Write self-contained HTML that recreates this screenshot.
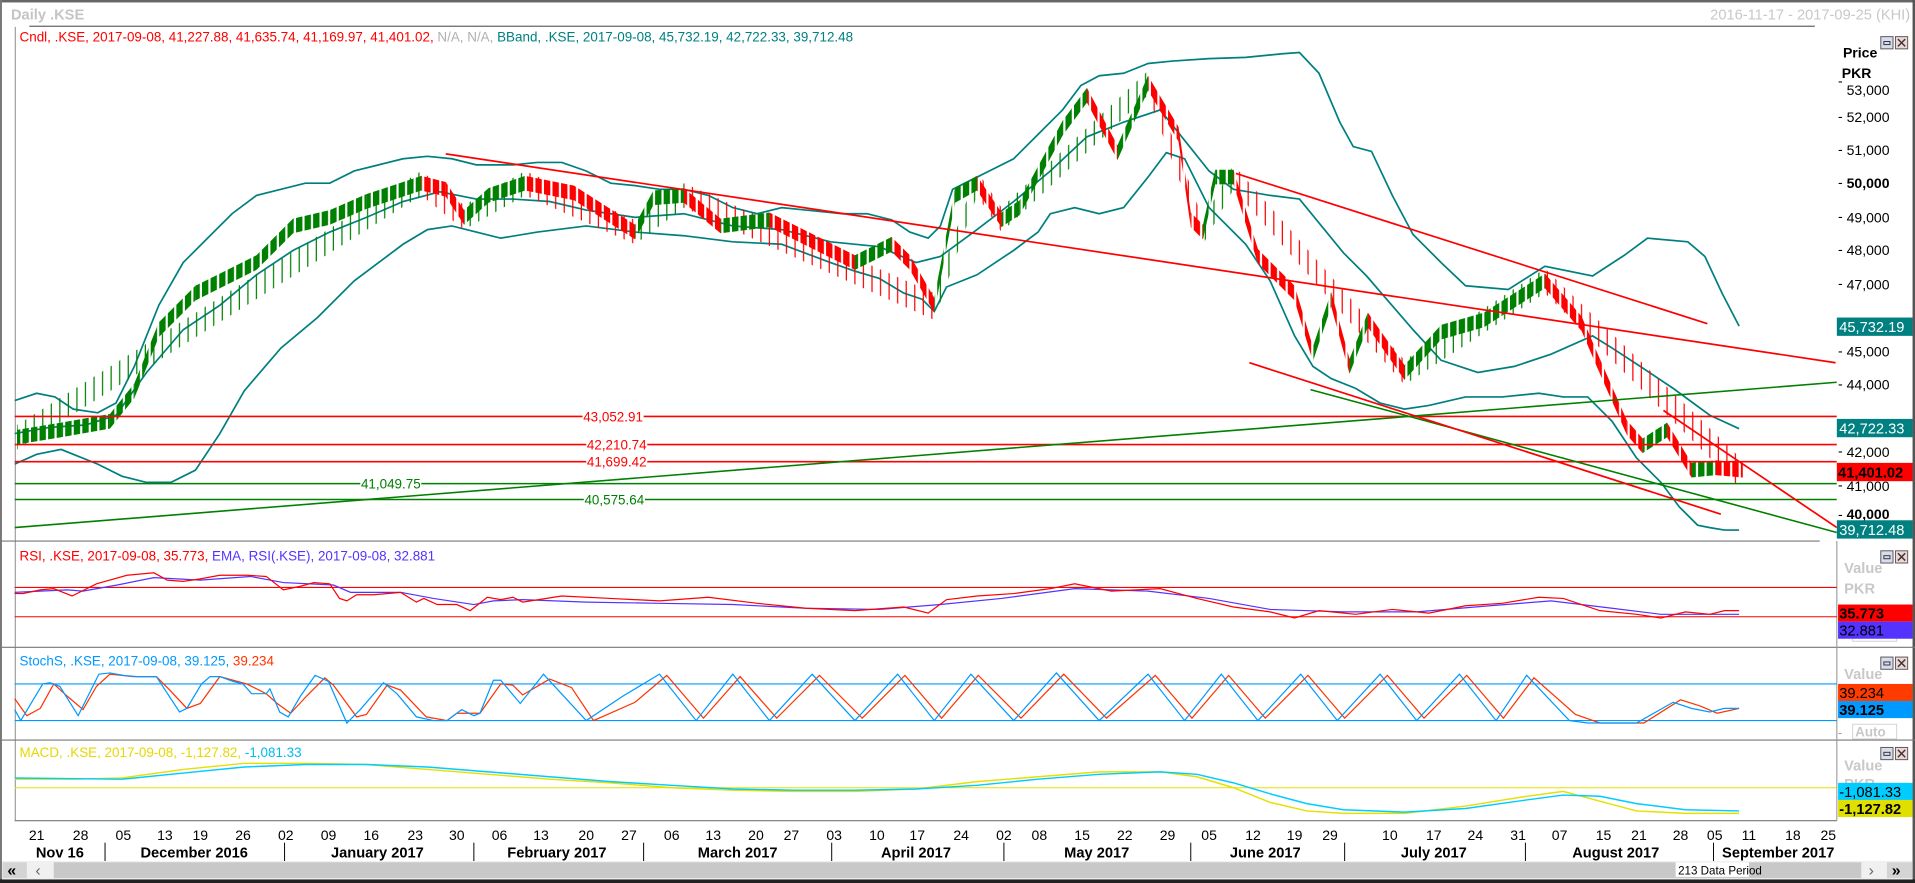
<!DOCTYPE html>
<html><head><meta charset="utf-8">
<style>
html,body{margin:0;padding:0;background:#fff;overflow:hidden;width:1915px;height:883px}
svg{display:block}
</style></head>
<body>
<svg width="1915" height="883" viewBox="0 0 1568 723" preserveAspectRatio="none" font-family="Liberation Sans, DejaVu Sans, sans-serif" font-size="11" xmlns="http://www.w3.org/2000/svg">
<defs>
<clipPath id="cp"><rect x="12" y="22" width="1492" height="421"/></clipPath>
<pattern id="pg" patternUnits="userSpaceOnUse" x="11.4" y="0" width="7" height="10"><rect x="0" y="0" width="5.2" height="10" fill="#008000"/><rect x="2.3" y="0" width="1" height="10" fill="#008000"/></pattern>
<pattern id="pr" patternUnits="userSpaceOnUse" x="11.4" y="0" width="7" height="10"><rect x="0" y="0" width="5.2" height="10" fill="#ff0000"/></pattern>
<pattern id="wg" patternUnits="userSpaceOnUse" x="11.4" y="0" width="7" height="10"><rect x="2.1" y="0" width="1" height="10" fill="#008000"/></pattern>
<pattern id="wr" patternUnits="userSpaceOnUse" x="11.4" y="0" width="7" height="10"><rect x="2.1" y="0" width="1" height="10" fill="#ff0000"/></pattern>
</defs>
<rect x="0" y="0" width="1568" height="723" fill="#fff"/>
<rect x="0" y="0" width="1568" height="2" fill="#666"/>
<rect x="0" y="0" width="1.6" height="723" fill="#777"/>
<rect x="1566" y="0" width="2" height="723" fill="#555"/>
<rect x="0" y="720" width="1568" height="3" fill="#222"/>
<line x1="12.5" y1="22" x2="12.5" y2="672" stroke="#888" stroke-width="0.8"/>
<text x="9" y="16" fill="#c4c4c4" font-size="12" font-weight="bold">Daily .KSE</text>
<text x="1564" y="16" fill="#c8c8c8" font-size="12" text-anchor="end">2016-11-17 - 2017-09-25 (KHI)</text>
<line x1="24" y1="21.5" x2="1486" y2="21.5" stroke="#666" stroke-width="1"/>
<text x="16" y="34" font-size="11"><tspan fill="#ff0000">Cndl, .KSE, 2017-09-08, 41,227.88, 41,635.74, 41,169.97, 41,401.02,</tspan><tspan fill="#b0b0b0"> N/A, N/A,</tspan><tspan fill="#008080"> BBand, .KSE, 2017-09-08, 45,732.19, 42,722.33, 39,712.48</tspan></text>

<line x1="0" y1="443" x2="1490" y2="443" stroke="#777" stroke-width="0.9"/>
<line x1="0" y1="530" x2="1568" y2="530" stroke="#777" stroke-width="0.9"/>
<line x1="0" y1="606" x2="1568" y2="606" stroke="#777" stroke-width="0.9"/>
<line x1="12" y1="672" x2="1504" y2="672" stroke="#777" stroke-width="0.9"/>
<line x1="1504" y1="443" x2="1504" y2="672" stroke="#999" stroke-width="0.9"/>

<g clip-path="url(#cp)">
<!-- Bollinger bands -->
<g fill="none" stroke="#007f7f" stroke-width="1.4">
<polyline points="12,328 30,322 45,325 60,335 80,338 95,330 110,300 130,250 150,215 170,195 190,175 210,160 230,155 250,150 270,150 290,140 310,135 330,130 350,128 370,130 390,135 420,135 440,133 460,133 480,140 500,150 520,152 540,155 560,155 580,160 600,170 620,175 640,170 660,172 690,175 710,175 730,180 745,190 760,195 770,185 780,155 790,150 810,140 830,130 850,110 870,90 885,70 900,62 920,60 940,52 960,50 990,48 1020,47 1050,44 1064,43 1080,60 1097,100 1108,120 1123,124 1140,160 1157,192 1180,215 1200,234 1235,237 1265,218 1304,226 1330,209 1349,195 1382,198 1396,210 1410,240 1424,267"/>
<polyline points="12,355 40,350 70,348 95,340 120,305 150,270 180,250 210,225 240,205 270,190 300,178 330,165 360,157 390,163 420,163 450,165 480,172 520,178 560,175 600,185 640,188 680,198 720,202 750,215 770,210 800,188 830,165 860,140 890,112 920,100 950,90 970,115 990,140 1010,155 1040,160 1064,163 1100,207 1119,226 1138,248 1157,270 1180,295 1210,305 1240,300 1270,290 1304,275 1320,285 1343,300 1370,318 1400,340 1424,351"/>
<polyline points="12,380 30,372 50,368 60,372 80,380 100,390 120,395 140,395 160,385 180,355 200,320 230,285 260,260 290,230 310,215 330,200 350,188 370,185 390,190 410,195 440,190 480,185 520,190 560,193 600,198 640,200 680,215 700,222 720,228 740,240 755,245 765,255 775,235 800,225 830,205 850,190 860,175 880,170 900,175 920,170 940,145 955,125 970,130 990,170 1020,200 1040,230 1060,275 1075,300 1090,310 1110,318 1130,330 1150,335 1170,332 1200,325 1230,325 1260,322 1280,325 1300,325 1320,345 1340,375 1360,395 1375,415 1390,430 1400,432 1412,434 1424,434"/>
</g>
<!-- candles (wicks) -->
<g>
<polygon fill="url(#wg)" points="14,348 345,140 345,160 14,368"/>
<polygon fill="url(#wr)" points="345,140 380,168 380,188 345,160"/>
<polygon fill="url(#wg)" points="380,168 430,140 430,160 380,188"/>
<polygon fill="url(#wr)" points="430,140 520,180 520,200 430,160"/>
<polygon fill="url(#wg)" points="520,180 560,150 560,170 520,200"/>
<polygon fill="url(#wr)" points="560,150 765,240 765,262 560,170"/>
<polygon fill="url(#wg)" points="765,240 800,140 800,160 765,262"/>
<polygon fill="url(#wr)" points="800,140 820,170 820,190 800,160"/>
<polygon fill="url(#wg)" points="820,170 940,58 940,78 820,190"/>
<polygon fill="url(#wr)" points="940,58 985,180 985,200 940,78"/>
<polygon fill="url(#wg)" points="985,180 1010,135 1010,155 985,200"/>
<polygon fill="url(#wr)" points="1010,135 1150,295 1150,315 1010,155"/>
<polygon fill="url(#wg)" points="1150,295 1265,220 1265,240 1150,315"/>
<polygon fill="url(#wr)" points="1265,220 1425,375 1425,400 1265,240"/>
</g>
<!-- candles (bodies) -->
<g>
<polygon fill="url(#pg)" points="14,352 50,346 50,358 14,364"/>
<polygon fill="url(#pg)" points="50,346 90,339 90,351 50,358"/>
<polygon fill="url(#pg)" points="90,339 110,314 110,326 90,351"/>
<polygon fill="url(#pg)" points="110,314 130,264 130,276 110,326"/>
<polygon fill="url(#pg)" points="130,264 160,234 160,246 130,276"/>
<polygon fill="url(#pg)" points="160,234 180,224 180,236 160,246"/>
<polygon fill="url(#pg)" points="180,224 210,209 210,221 180,236"/>
<polygon fill="url(#pg)" points="210,209 240,179 240,191 210,221"/>
<polygon fill="url(#pg)" points="240,179 270,172 270,184 240,191"/>
<polygon fill="url(#pg)" points="270,172 300,159 300,171 270,184"/>
<polygon fill="url(#pg)" points="300,159 345,144 345,156 300,171"/>
<polygon fill="url(#pr)" points="345,144 365,149 365,161 345,156"/>
<polygon fill="url(#pr)" points="365,149 380,172 380,184 365,161"/>
<polygon fill="url(#pg)" points="380,172 400,154 400,166 380,184"/>
<polygon fill="url(#pg)" points="400,154 430,144 430,156 400,166"/>
<polygon fill="url(#pr)" points="430,144 470,152 470,164 430,156"/>
<polygon fill="url(#pr)" points="470,152 520,184 520,196 470,164"/>
<polygon fill="url(#pg)" points="520,184 535,156 535,168 520,196"/>
<polygon fill="url(#pg)" points="535,156 560,154 560,166 535,168"/>
<polygon fill="url(#pr)" points="560,154 590,179 590,191 560,166"/>
<polygon fill="url(#pg)" points="590,179 630,174 630,186 590,191"/>
<polygon fill="url(#pr)" points="630,174 700,209 700,221 630,186"/>
<polygon fill="url(#pg)" points="700,209 730,194 730,206 700,221"/>
<polygon fill="url(#pr)" points="730,194 745,209 745,221 730,206"/>
<polygon fill="url(#pr)" points="745,209 765,244 765,256 745,221"/>
<polygon fill="url(#pg)" points="765,244 782,154 782,166 765,256"/>
<polygon fill="url(#pg)" points="782,154 800,144 800,156 782,166"/>
<polygon fill="url(#pr)" points="800,144 820,174 820,186 800,156"/>
<polygon fill="url(#pg)" points="820,174 835,164 835,176 820,186"/>
<polygon fill="url(#pg)" points="835,164 870,99 870,111 835,176"/>
<polygon fill="url(#pg)" points="870,99 890,72 890,84 870,111"/>
<polygon fill="url(#pr)" points="890,72 915,119 915,131 890,84"/>
<polygon fill="url(#pg)" points="915,119 940,62 940,74 915,131"/>
<polygon fill="url(#pr)" points="940,62 965,104 965,116 940,74"/>
<polygon fill="url(#pr)" points="965,104 975,174 975,186 965,116"/>
<polygon fill="url(#pr)" points="975,174 985,184 985,196 975,186"/>
<polygon fill="url(#pg)" points="985,184 995,139 995,151 985,196"/>
<polygon fill="url(#pg)" points="995,139 1010,139 1010,151 995,151"/>
<polygon fill="url(#pr)" points="1010,139 1030,204 1030,216 1010,151"/>
<polygon fill="url(#pr)" points="1030,204 1060,234 1060,246 1030,216"/>
<polygon fill="url(#pr)" points="1060,234 1075,284 1075,296 1060,246"/>
<polygon fill="url(#pg)" points="1075,284 1090,239 1090,251 1075,296"/>
<polygon fill="url(#pr)" points="1090,239 1105,294 1105,306 1090,251"/>
<polygon fill="url(#pg)" points="1105,294 1120,256 1120,268 1105,306"/>
<polygon fill="url(#pr)" points="1120,256 1150,299 1150,311 1120,268"/>
<polygon fill="url(#pg)" points="1150,299 1180,266 1180,278 1150,311"/>
<polygon fill="url(#pg)" points="1180,266 1215,256 1215,268 1180,278"/>
<polygon fill="url(#pg)" points="1215,256 1265,224 1265,236 1215,268"/>
<polygon fill="url(#pr)" points="1265,224 1295,259 1295,271 1265,236"/>
<polygon fill="url(#pr)" points="1295,259 1310,294 1310,306 1295,271"/>
<polygon fill="url(#pr)" points="1310,294 1332,344 1332,356 1310,306"/>
<polygon fill="url(#pr)" points="1332,344 1345,359 1345,371 1332,356"/>
<polygon fill="url(#pg)" points="1345,359 1365,346 1365,358 1345,371"/>
<polygon fill="url(#pr)" points="1365,346 1385,379 1385,391 1365,358"/>
<polygon fill="url(#pg)" points="1385,379 1405,377 1405,389 1385,391"/>
<polygon fill="url(#pr)" points="1405,377 1427,379 1427,391 1405,389"/>
</g>
<!-- levels / trend lines -->
<line x1="12" y1="341" x2="1504" y2="341" stroke="#ff0000" stroke-width="1.3"/>
<line x1="12" y1="364" x2="1504" y2="364" stroke="#ff0000" stroke-width="1.3"/>
<line x1="12" y1="378" x2="1504" y2="378" stroke="#ff0000" stroke-width="1.3"/>
<line x1="12" y1="396" x2="1504" y2="396" stroke="#008000" stroke-width="1.3"/>
<line x1="12" y1="409" x2="1504" y2="409" stroke="#008000" stroke-width="1.3"/>
<line x1="12" y1="432" x2="1504" y2="313" stroke="#008000" stroke-width="1.3"/>
<line x1="1073" y1="319" x2="1504" y2="436" stroke="#008000" stroke-width="1.3"/>
<line x1="365" y1="126" x2="1503" y2="297" stroke="#ff0000" stroke-width="1.4"/>
<line x1="1012" y1="142" x2="1398" y2="265" stroke="#ff0000" stroke-width="1.4"/>
<line x1="1023" y1="297" x2="1409" y2="421" stroke="#ff0000" stroke-width="1.4"/>
<line x1="1362" y1="336" x2="1504" y2="432" stroke="#ff0000" stroke-width="1.4"/>
</g>
<g font-size="11">
<rect x="477" y="334" width="50" height="12" fill="#fff"/><text x="502" y="345" fill="#ff0000" text-anchor="middle">43,052.91</text>
<rect x="480" y="357" width="50" height="12" fill="#fff"/><text x="505" y="368" fill="#ff0000" text-anchor="middle">42,210.74</text>
<rect x="480" y="371" width="50" height="12" fill="#fff"/><text x="505" y="382" fill="#ff0000" text-anchor="middle">41,699.42</text>
<rect x="295" y="389" width="50" height="12" fill="#fff"/><text x="320" y="400" fill="#008000" text-anchor="middle">41,049.75</text>
<rect x="478" y="402" width="50" height="12" fill="#fff"/><text x="503" y="413" fill="#008000" text-anchor="middle">40,575.64</text>
</g>

<g font-size="11.5" fill="#000">
<text x="1509" y="47" font-weight="bold">Price</text>
<text x="1508" y="64" font-weight="bold">PKR</text>
<text x="1505" y="70">-</text><text x="1512" y="78">53,000</text>
<text x="1505" y="99">-</text><text x="1512" y="100">52,000</text>
<text x="1505" y="126">-</text><text x="1512" y="127">51,000</text>
<text x="1505" y="153">-</text><text x="1512" y="154" font-weight="bold">50,000</text>
<text x="1505" y="181">-</text><text x="1512" y="182">49,000</text>
<text x="1505" y="208">-</text><text x="1512" y="209">48,000</text>
<text x="1505" y="236">-</text><text x="1512" y="237">47,000</text>
<text x="1505" y="291">-</text><text x="1512" y="292">45,000</text>
<text x="1505" y="318">-</text><text x="1512" y="319">44,000</text>
<text x="1505" y="373">-</text><text x="1512" y="374">42,000</text>
<text x="1505" y="401">-</text><text x="1512" y="402">41,000</text>
<text x="1505" y="425">-</text><text x="1512" y="425" font-weight="bold">40,000</text>
</g>
<rect x="1504" y="260" width="62" height="15" fill="#008080"/><text x="1506" y="272" fill="#fff" font-size="12">45,732.19</text>
<rect x="1504" y="343" width="62" height="15" fill="#008080"/><text x="1506" y="355" fill="#fff" font-size="12">42,722.33</text>
<rect x="1504" y="379" width="62" height="15" fill="#ff0000"/><text x="1505" y="391" fill="#000" font-size="12" font-weight="bold">41,401.02</text>
<rect x="1504" y="426" width="62" height="15" fill="#008080"/><text x="1506" y="438" fill="#fff" font-size="12">39,712.48</text>

<!-- buttons -->
<g stroke-width="0.8">
<rect x="1540" y="30" width="10" height="10" fill="#d8dde8" stroke="#556"/><rect x="1542.5" y="34" width="5" height="2.5" fill="none" stroke="#334"/><rect x="1552" y="30" width="10" height="10" fill="#e8d8d8" stroke="#655"/><path d="M1554 32L1560 38M1560 32L1554 38" stroke="#433" stroke-width="1.2"/>
<rect x="1540" y="451" width="10" height="10" fill="#d8dde8" stroke="#556"/><rect x="1542.5" y="455" width="5" height="2.5" fill="none" stroke="#334"/><rect x="1552" y="451" width="10" height="10" fill="#e8d8d8" stroke="#655"/><path d="M1554 453L1560 459M1560 453L1554 459" stroke="#433" stroke-width="1.2"/>
<rect x="1540" y="538" width="10" height="10" fill="#d8dde8" stroke="#556"/><rect x="1542.5" y="542" width="5" height="2.5" fill="none" stroke="#334"/><rect x="1552" y="538" width="10" height="10" fill="#e8d8d8" stroke="#655"/><path d="M1554 540L1560 546M1560 540L1554 546" stroke="#433" stroke-width="1.2"/>
<rect x="1540" y="612" width="10" height="10" fill="#d8dde8" stroke="#556"/><rect x="1542.5" y="616" width="5" height="2.5" fill="none" stroke="#334"/><rect x="1552" y="612" width="10" height="10" fill="#e8d8d8" stroke="#655"/><path d="M1554 614L1560 620M1560 614L1554 620" stroke="#433" stroke-width="1.2"/>
</g>

<!-- RSI -->
<text x="16" y="459" font-size="11"><tspan fill="#ff0000">RSI, .KSE, 2017-09-08, 35.773,</tspan><tspan fill="#5533ff"> EMA, RSI(.KSE), 2017-09-08, 32.881</tspan></text>
<line x1="12" y1="481" x2="1504" y2="481" stroke="#ff0000" stroke-width="0.9"/>
<line x1="12" y1="505" x2="1504" y2="505" stroke="#ff0000" stroke-width="0.9"/>
<polyline fill="none" stroke="#5533ff" stroke-width="1" points="12,485 33,484 55,483 68,484 96,479 126,473 164,475 205,472 232,477 273,479 287,485 328,485 355,490 388,495 404,492 428,491 480,493 540,494 600,495 660,498 720,499 770,495 820,490 880,482 940,484 990,490 1040,499 1100,501 1160,501 1220,496 1270,492 1320,498 1360,503 1400,503 1424,503"/>
<polyline fill="none" stroke="#ff0000" stroke-width="1" points="12,486 19,486 33,483 44,482 59,488 79,478 104,471 126,469 137,475 150,476 164,474 180,471 202,471 218,472 232,483 246,480 257,477 270,478 278,490 284,492 292,487 306,487 328,485 341,493 347,490 358,495 374,495 385,500 399,489 410,491 420,489 428,493 460,488 500,490 540,492 580,489 620,494 660,498 700,500 740,497 760,502 775,491 800,488 830,486 860,482 880,478 910,484 950,482 980,490 1010,497 1040,501 1060,506 1080,500 1110,503 1140,499 1170,502 1200,496 1230,494 1260,489 1280,490 1310,500 1340,503 1360,506 1380,501 1400,503 1412,500 1424,500"/>
<text x="1510" y="469" fill="#c8c8c8" font-size="12" font-weight="bold">Value</text>
<text x="1510" y="486" fill="#c8c8c8" font-size="12" font-weight="bold">PKR</text>
<rect x="1517" y="513" width="36" height="12" fill="none" stroke="#ccc" stroke-width="0.7"/>
<text x="1519" y="523" fill="#c8c8c8" font-size="11" font-weight="bold">Auto</text>
<rect x="1505" y="495" width="61" height="14" fill="#ff0000"/><text x="1506" y="506.5" fill="#000" font-size="12" font-weight="bold">35.773</text>
<rect x="1505" y="509" width="61" height="14" fill="#5533ff"/><text x="1506" y="520.5" fill="#000" font-size="12">32.881</text>

<!-- Stoch -->
<text x="16" y="545" font-size="11"><tspan fill="#0099ff">StochS, .KSE, 2017-09-08, 39.125,</tspan><tspan fill="#ff3300"> 39.234</tspan></text>
<line x1="12" y1="560" x2="1504" y2="560" stroke="#0099ff" stroke-width="0.9"/>
<line x1="12" y1="590" x2="1504" y2="590" stroke="#0099ff" stroke-width="0.9"/>
<polyline fill="none" stroke="#ff3300" stroke-width="1" points="12,572 22,586 33,580 44,560 55,570 68,581 79,562 90,552 109,554 128,554 139,565 153,580 164,576 180,554 202,560 218,568 227,576 238,584 251,570 266,555 273,561 292,587 300,585 317,561 328,565 349,587 366,590 374,584 393,584 410,560 420,561 428,569 450,556 468,563 486,590 520,575 546,553 576,588 606,554 636,588 671,553 706,588 741,553 771,588 801,553 836,588 871,552 906,588 946,553 976,588 1006,553 1036,588 1071,553 1101,588 1136,553 1166,588 1201,553 1231,588 1256,555 1290,585 1310,592 1346,592 1376,573 1392,578 1406,584 1424,580"/>
<polyline fill="none" stroke="#0099ff" stroke-width="1" points="12,581 17,590 35,560 41,559 49,562 64,586 81,552 90,551 101,553 112,554 128,554 147,583 153,580 165,560 172,554 180,554 191,558 199,560 206,568 218,568 221,564 229,583 236,587 246,570 258,553 269,558 284,592 295,581 314,559 325,568 341,587 355,590 366,590 378,581 388,586 393,584 404,557 410,557 426,576 445,552 480,590 510,570 540,552 570,590 600,552 630,590 665,552 700,590 735,552 765,590 795,552 830,590 865,551 900,590 940,552 970,590 1000,552 1030,590 1065,552 1095,590 1130,552 1160,590 1195,552 1225,590 1250,553 1285,590 1300,592 1340,592 1370,575 1385,580 1400,583 1412,580 1424,580"/>
<text x="1510" y="556" fill="#c8c8c8" font-size="12" font-weight="bold">Value</text>
<rect x="1505" y="560" width="61" height="14" fill="#ff3c00"/><text x="1506" y="571.5" fill="#000" font-size="12">39.234</text>
<rect x="1505" y="574" width="61" height="14" fill="#0099ff"/><text x="1506" y="585.5" fill="#000" font-size="12" font-weight="bold">39.125</text>
<rect x="1517" y="593" width="36" height="12" fill="none" stroke="#ccc" stroke-width="0.7"/>
<text x="1505" y="603" fill="#999" font-size="10">-</text>
<text x="1519" y="603" fill="#c8c8c8" font-size="11" font-weight="bold">Auto</text>

<!-- MACD -->
<text x="16" y="620" font-size="11"><tspan fill="#e6d800">MACD, .KSE, 2017-09-08, -1,127.82,</tspan><tspan fill="#00bbee"> -1,081.33</tspan></text>
<line x1="12" y1="645" x2="1504" y2="645" stroke="#e6e000" stroke-width="0.9"/>
<polyline fill="none" stroke="#e6e000" stroke-width="1.2" points="12,638 60,638 100,637 150,630 200,625 250,625 300,626 350,630 400,634 450,638 500,641 550,645 600,647 650,648 700,648 750,646 800,640 850,636 900,632 950,632 980,636 1010,645 1040,657 1070,664 1100,666 1150,666 1200,660 1250,652 1280,648 1310,656 1340,664 1380,666 1424,666"/>
<polyline fill="none" stroke="#00ccff" stroke-width="1.2" points="12,637 100,638 150,633 200,628 250,626 300,626 350,628 400,632 450,636 500,640 550,643 600,646 650,647 700,647 750,646 800,643 850,638 900,634 950,632 980,634 1010,641 1040,650 1070,658 1100,663 1150,665 1200,662 1250,655 1280,651 1310,652 1340,658 1380,663 1424,664"/>
<text x="1510" y="631" fill="#c8c8c8" font-size="12" font-weight="bold">Value</text>
<text x="1510" y="646" fill="#c8c8c8" font-size="12" font-weight="bold">PKR</text>
<rect x="1505" y="641" width="61" height="14" fill="#00ccff"/><text x="1506" y="652.5" fill="#000" font-size="12">-1,081.33</text>
<rect x="1505" y="655" width="61" height="14" fill="#e0e000"/><text x="1506" y="666.5" fill="#000" font-size="12" font-weight="bold">-1,127.82</text>

<!-- date axis -->
<g font-size="11.5" fill="#000" text-anchor="middle">
<text x="30" y="688">21</text><text x="66" y="688">28</text><text x="101" y="688">05</text><text x="135" y="688">13</text><text x="164" y="688">19</text><text x="199" y="688">26</text><text x="234" y="688">02</text><text x="269" y="688">09</text><text x="304" y="688">16</text><text x="340" y="688">23</text><text x="374" y="688">30</text><text x="409" y="688">06</text><text x="443" y="688">13</text><text x="480" y="688">20</text><text x="515" y="688">27</text><text x="550" y="688">06</text><text x="584" y="688">13</text><text x="619" y="688">20</text><text x="648" y="688">27</text><text x="683" y="688">03</text><text x="718" y="688">10</text><text x="751" y="688">17</text><text x="787" y="688">24</text><text x="822" y="688">02</text><text x="851" y="688">08</text><text x="886" y="688">15</text><text x="921" y="688">22</text><text x="956" y="688">29</text><text x="990" y="688">05</text><text x="1026" y="688">12</text><text x="1060" y="688">19</text><text x="1089" y="688">29</text><text x="1138" y="688">10</text><text x="1174" y="688">17</text><text x="1208" y="688">24</text><text x="1243" y="688">31</text><text x="1277" y="688">07</text><text x="1313" y="688">15</text><text x="1342" y="688">21</text><text x="1376" y="688">28</text><text x="1404" y="688">05</text><text x="1432" y="688">11</text><text x="1468" y="688">18</text><text x="1497" y="688">25</text>
</g>
<g font-size="12" font-weight="bold" fill="#000" text-anchor="middle">
<text x="49" y="702">Nov 16</text><text x="159" y="702">December 2016</text><text x="309" y="702">January 2017</text><text x="456" y="702">February 2017</text><text x="604" y="702">March 2017</text><text x="750" y="702">April 2017</text><text x="898" y="702">May 2017</text><text x="1036" y="702">June 2017</text><text x="1174" y="702">July 2017</text><text x="1323" y="702">August 2017</text><text x="1456" y="702">September 2017</text>
</g>
<g stroke="#000" stroke-width="0.8">
<line x1="86" y1="690" x2="86" y2="705"/><line x1="233" y1="690" x2="233" y2="705"/><line x1="388" y1="690" x2="388" y2="705"/><line x1="527" y1="690" x2="527" y2="705"/><line x1="681" y1="690" x2="681" y2="705"/><line x1="822" y1="690" x2="822" y2="705"/><line x1="975" y1="690" x2="975" y2="705"/><line x1="1101" y1="690" x2="1101" y2="705"/><line x1="1249" y1="690" x2="1249" y2="705"/><line x1="1403" y1="690" x2="1403" y2="705"/>
</g>
<!-- scrollbar -->
<rect x="2" y="705" width="1564" height="15" fill="#f0f0f0"/>
<rect x="2" y="706" width="20" height="13" fill="#d4d4d4"/>
<text x="6" y="717" font-size="13" font-weight="bold">«</text>
<text x="29" y="717" font-size="13" fill="#666">‹</text>
<rect x="44" y="706" width="1482" height="13" fill="#c8c8c8"/>
<rect x="1372" y="706" width="60" height="12" fill="#fff"/>
<text x="1374" y="716" font-size="9.5">213 Data Period</text>
<rect x="1524" y="706" width="20" height="13" fill="#f0f0f0"/>
<text x="1530" y="717" font-size="13" fill="#666">›</text>
<rect x="1545" y="706" width="21" height="13" fill="#d4d4d4"/>
<text x="1549" y="717" font-size="13" font-weight="bold">»</text>
</svg>
</body></html>
